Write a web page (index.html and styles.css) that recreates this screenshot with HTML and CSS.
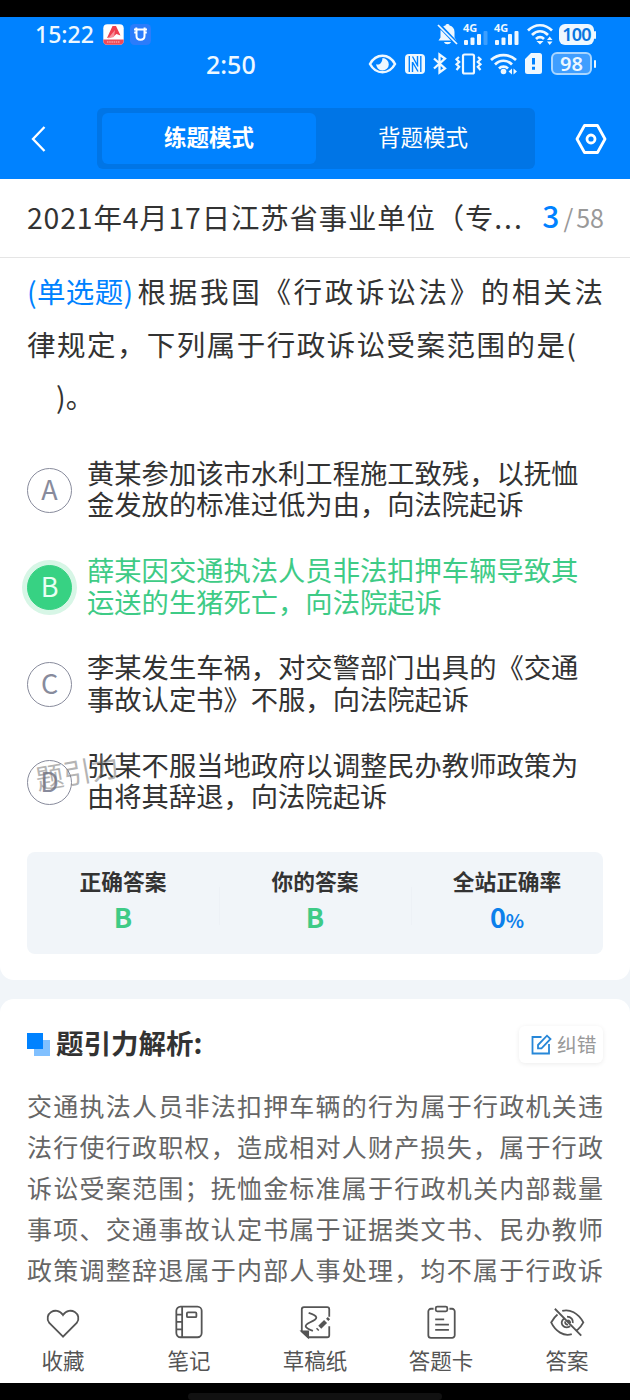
FILE: index.html
```
<!DOCTYPE html>
<html lang="zh-CN">
<head>
<meta charset="utf-8">
<title>练题模式</title>
<link rel="stylesheet" href="styles.css">
</head>
<body>
<div class="screen">
<div class="bezel"></div>
<header class="header">
  <div class="status status-top">
    <span class="clock">15:22</span>
    <svg class="app-a" width="21" height="21" viewBox="0 0 21 21"><rect x=".3" y=".3" width="20.4" height="20.4" rx="4" fill="#fff"/><path d="M.3 15.5h20.4v1.2a4 4 0 0 1-4 4H4.300a4 4 0 0 1-4-4z" fill="#f04a58"/><path d="M4 14 9.500 2h3.500l4.500 9.500-4-1.500-3 2.500z" fill="#ee3f50"/><path d="M5 14.500 12 6l-1 7z" fill="#f8919a"/><path d="M4 18h13" stroke="#ffc4c8" stroke-dasharray="1.500 .7"/></svg>
    <svg class="app-u" width="21" height="21" viewBox="0 0 21 21"><rect width="21" height="21" rx="4.500" fill="#2b7cfb"/><path d="M4 5.500h13M6.500 5.500v6.500c0 5 8 5 8 0V5.500M4.200 8.500h2M14.500 8.500h2.300M6.300 3.500v2M14.600 3.500v2" fill="none" stroke="#fff" stroke-width="2"/></svg>
    <svg class="bell" width="21" height="22" viewBox="0 0 21 22" fill="#eef8ff"><path d="M3.500 14.500V9c0-4 2.500-6 5-6.500 0-2 4-2 4 0 3 .7 5 3 5 6.500v5.500l2 3h-18zM7 19h7c-1 3-6 3-7 0z"/><path d="m1 1 19 20" stroke="#0082ff" stroke-width="4"/><path d="m1 2 19 19" stroke="#eef8ff" stroke-width="1.700"/></svg>
    <svg class="sig1" width="25" height="23" viewBox="0 0 25 23" fill="#eef8ff"><text class="g4" x="0" y="9">4G</text><rect x="1" y="17" width="4" height="5" rx="1"/><rect x="7.500" y="14.500" width="4" height="7.500" rx="1"/><rect x="14" y="11" width="4" height="11" rx="1"/><rect x="20.500" y="8" width="4" height="14" rx="1" opacity=".25"/></svg>
    <svg class="sig2" width="25" height="23" viewBox="0 0 25 23" fill="#eef8ff"><text class="g4" x="0" y="9">4G</text><rect x="1" y="17" width="4" height="5" rx="1"/><rect x="7.500" y="14.500" width="4" height="7.500" rx="1"/><rect x="14" y="11" width="4" height="11" rx="1"/><rect x="20.500" y="8" width="4" height="14" rx="1"/></svg>
    <svg class="wifi1" width="26" height="22" viewBox="0 0 26 22"><g fill="none" stroke="#eef8ff" stroke-width="2.700"><path d="M1 7.500c7-7 17-7 24 0M5 12c5-5 11-5 16 0M9 16c2.500-2.500 5.500-2.500 8 0"/></g><path d="m9.500 18 3.500 3.500 3.500-3.500zM20 17l2.700-3.500L25.500 17zM20 18.500l2.700 3.500 2.800-3.500z" fill="#eef8ff"/></svg>
    <span class="bat bat-full">100</span>
  </div>
  <div class="status status-second">
    <span class="clock">2:50</span>
    <svg class="eye" width="29" height="20" viewBox="0 0 29 20"><path d="M2 10C8-1 21-1 27 10 21 21 8 21 2 10z" fill="none" stroke="#eef8ff" stroke-width="2.500"/><path d="M14.500 4a6.300 6.300 0 1 1-6.300 6c2 1.500 6 0 6.300-6z" fill="#eef8ff"/></svg>
    <svg class="nfc" width="20" height="20" viewBox="0 0 20 20"><rect width="20" height="20" rx="4" fill="#eef8ff"/><path d="M4.300 2v16M7.500 18V8M7.500 2.500l5.500 10M7.500 8l5.500 9.500M12.500 12V2M15.800 18V2" fill="none" stroke="#0082ff" stroke-width="1.400"/></svg>
    <svg class="bt" width="14" height="21" viewBox="0 0 14 21"><path d="m1 5.500 11 10-5.500 4V1.500l5.500 4-11 10" fill="none" stroke="#eef8ff" stroke-width="2.300"/></svg>
    <svg class="vib" width="27" height="22" viewBox="0 0 27 22" fill="none" stroke="#eef8ff" stroke-width="2.200"><rect x="8" y="1.500" width="11" height="19" rx="1.500"/><path d="m4 4-2.500 2.300L4.200 9l-2.700 2.300 2.700 2.500L1.500 17M23 4l2.500 2.300L22.800 9l2.700 2.300-2.700 2.500 2.700 3.200"/></svg>
    <svg class="wifi2" width="27" height="22" viewBox="0 0 27 22"><g fill="none" stroke="#eef8ff" stroke-width="2.700"><path d="M1 7c7-6.500 18-6.500 25 0M5 11.500c5-5 12-5 17 0M9 15.500c2.500-2.500 6.500-2.500 9 0"/></g><circle cx="13.500" cy="18.500" r="2.800" fill="#eef8ff"/><path d="m22 15.500-3.500 3 3.500 3zM23.500 15.500l3.500 3-3.500 3z" fill="#eef8ff"/></svg>
    <svg class="sim" width="17" height="21" viewBox="0 0 17 21"><path d="M6 0h8.500A2.500 2.500 0 0 1 17 2.500v16a2.500 2.500 0 0 1-2.500 2.500h-12A2.500 2.500 0 0 1 0 18.500V6z" fill="#eef8ff"/><path d="M8.500 5v6.500M8.500 13.700v3" stroke="#0082ff" stroke-width="3"/></svg>
    <span class="bat bat-line">98</span>
  </div>
  <nav class="topnav">
    <svg class="back" width="16" height="30" viewBox="0 0 16 30"><path d="M13.500 3 2 15l11.500 12" fill="none" stroke="#fff" stroke-width="2.300"/></svg>
    <div class="tabs"><span class="tab tab-on">练题模式</span><span class="tab">背题模式</span></div>
    <svg class="gear" width="32" height="34" viewBox="0 0 32 34" fill="none" stroke="#fff" stroke-width="2.800" stroke-linejoin="round"><path d="M9.500 3.500h13L30 17l-7.500 13.500h-13L2 17z"/><circle cx="16" cy="17" r="4"/></svg>
  </nav>
</header>
<div class="titlebar"><h1>2021年4月17日江苏省事业单位（专<i>...</i></h1><span class="count"><b>3</b><em>/</em>58</span></div>
<main class="question">
  <div class="stem">
    <p class="line"><span class="kind">(单选题)</span><span class="fill">根据我国《行政诉讼法》的相关法</span></p>
    <p class="line line-two">律规定，下列属于行政诉讼受案范围的是(</p>
    <p class="line line-three">)。</p>
  </div>
  <ul class="options">
    <li><span class="mark">A</span><p>黄某参加该市水利工程施工致残，以抚恤<br>金发放的标准过低为由，向法院起诉</p></li>
    <li class="right"><span class="mark">B</span><p>薛某因交通执法人员非法扣押车辆导致其<br>运送的生猪死亡，向法院起诉</p></li>
    <li><span class="mark">C</span><p>李某发生车祸，对交警部门出具的《交通<br>事故认定书》不服，向法院起诉</p></li>
    <li><span class="mark">D</span><p>张某不服当地政府以调整民办教师政策为<br>由将其辞退，向法院起诉</p><span class="watermark">题引力</span></li>
  </ul>
  <div class="result">
    <div><span>正确答案</span><strong>B</strong></div>
    <div><span>你的答案</span><strong>B</strong></div>
    <div><span>全站正确率</span><strong class="rate">0<small>%</small></strong></div>
  </div>
</main>
<section class="analysis">
  <div class="ahead">
    <svg width="23" height="23" viewBox="0 0 23 23"><path d="M7 7h16v16H7z" fill="#80c0ff"/><path d="M0 0h16v16H0z" fill="#0082ff"/></svg>
    <h2>题引力解析:</h2>
    <span class="fix"><svg width="21" height="21" viewBox="0 0 21 21" fill="none" stroke="#2787d8" stroke-width="1.800"><path d="M10.500 3H1.500v16.500H18V10"/><path d="m7 11 9-9.300 3.500 3.300-9 9.300H7z"/></svg><span>纠错</span></span>
  </div>
  <div class="atext">
    <p>交通执法人员非法扣押车辆的行为属于行政机关违</p>
    <p>法行使行政职权，造成相对人财产损失，属于行政</p>
    <p>诉讼受案范围；抚恤金标准属于行政机关内部裁量</p>
    <p>事项、交通事故认定书属于证据类文书、民办教师</p>
    <p>政策调整辞退属于内部人事处理，均不属于行政诉</p>
  </div>
</section>
<footer class="toolbar">
  <div><svg viewBox="0 0 36 36"><path d="M18 31 5 18C-1 10 11.500 1 18 10.500 24.500 1 37 10 31 18z"/></svg>收藏</div>
  <div><svg viewBox="0 0 36 36"><rect x="6" y="2.500" width="24" height="29" rx="4"/><path d="M11.500 2.500v29M6 10h5.500M6 17h5.500M6 24h5.500"/><rect x="16" y="8" width="9" height="4.500" rx="1"/></svg>笔记</div>
  <div><svg viewBox="0 0 36 36"><path d="M31.500 12V5a2 2 0 0 0-2-2h-22a2 2 0 0 0-2 2V26l6 5.500h18a2 2 0 0 0 2-2V21M12 8.500c9 3 10 5 1 9-6 3-5 5 3 8"/><path d="M5.500 26H11.500v5.500z" fill="#555"/><path d="m22.500 22 5.500-5.500" stroke-width="4"/><path d="m20 24.500 1-1M29.500 15l1.700-1.700" stroke-width="3"/></svg>草稿纸</div>
  <div><svg viewBox="0 0 36 36"><path d="M11 4.500H8.500A2.500 2.500 0 0 0 6 7v22.500A2.500 2.500 0 0 0 8.500 32h20a2.500 2.500 0 0 0 2.500-2.500V7A2.500 2.500 0 0 0 28.500 4.500H26M12.500 14.500h8.500M12.500 19.500h13M12.500 24.500h13"/><rect x="13" y="2.500" width="11" height="4.500" rx="1.500"/></svg>答题卡</div>
  <div><svg viewBox="0 0 36 36"><path d="M13.500 6.500c7-2 15 2 20 11-2 4-4 6-6.500 8M22.500 28.500C15 31 7 26 3 17.500c2-3.500 3.500-5.500 6-7.500M15 14c-5 4 0 10.500 6 7M18 12c4 0 6 3 5.500 6M16.500 16.500c-1 2 1 3.500 2.500 3M18.500 15.500c1.500 0 2.500 1 2.500 2.500M6.500 4.500l25 25.500"/></svg>答案</div>
</footer>
<div class="homebar"><span></span></div>
</div>
</body>
</html>
```
FILE: styles.css
```
* { box-sizing: border-box; }
body, h1, h2, p, ul { margin: 0; padding: 0; }
body { background: #000; font-family: "Noto Sans CJK SC", sans-serif; color: #333; }
svg { display: block; flex: none; overflow: visible; }
.screen { width: 630px; height: 1400px; display: flex; flex-direction: column; overflow: hidden; background: #f1f5f9; }
.bezel { height: 17px; flex: none; background: #000; }

.header { height: 162px; flex: none; background: #0082ff; color: #eef8ff; }
.status { display: flex; align-items: center; white-space: nowrap; }
.clock { font-family: "Noto Sans", sans-serif; font-weight: 500; line-height: 30px; }
.status-top { height: 34px; padding-left: 35px; }
.status-top .clock { width: 59px; font-size: 23px; }
.app-a { margin-left: 9px; }
.app-u { margin-left: 6px; }
.bell { margin-left: 286px; }
.sig1 { margin-left: 5px; }
.sig2 { margin-left: 6px; }
.wifi1 { margin-left: 8px; }
.g4 { font: 700 11px "Noto Sans", sans-serif; }
.status-top .bat { margin-left: 6px; }
.status-second { height: 25px; padding-left: 206px; }
.status-second .clock { width: 53px; font-size: 25px; }
.eye { margin-left: 109px; }
.nfc { margin-left: 8px; }
.bt { margin-left: 8px; }
.vib { margin-left: 8px; }
.wifi2 { margin-left: 8px; }
.sim { margin-left: 8px; }
.status-second .bat { margin-left: 9px; }
.bat { position: relative; text-align: center; font: 600 18px/21px "Noto Sans", sans-serif; border-radius: 6px; }
.bat::after { content: ""; position: absolute; right: -2px; top: 7px; width: 2px; height: 8px; background: #eef8ff; border-radius: 1px; }
.bat-full { width: 35px; height: 21px; background: #eef8ff; color: #0875df; letter-spacing: -.8px; }
.bat-line { width: 41px; height: 23px; line-height: 19px; border: 2px solid #a9d6ff; background: #3f9eff; font-size: 20px; }
.bat-line::after { right: -6px; top: 6px; }
.topnav { height: 61px; margin-top: 32px; padding: 0 23px 0 31px; display: flex; align-items: center; }
.tabs { width: 438px; height: 61px; margin-left: 50px; padding: 5px; display: flex; border-radius: 6px; background: #0075e6; }
.tab { width: 214px; height: 51px; font-size: 22.500px; line-height: 47px; text-align: center; color: #fff; border-radius: 6px; }
.tab-on { background: #0082ff; font-weight: 700; }
.gear { margin-left: auto; }

.titlebar { height: 79px; flex: none; display: flex; align-items: center; justify-content: space-between; padding: 0 26px 4px 27px; background: #fff; border-bottom: 1px solid #e5e5e5; }
h1 { font-size: 28.400px; font-weight: 400; letter-spacing: .85px; white-space: nowrap; }
h1 i { font-style: normal; letter-spacing: 2px; }
.count { display: flex; align-items: baseline; font-size: 25px; line-height: 40px; color: #999; }
.count b { font-size: 30px; font-weight: 500; color: #0082ff; }
.count em { font-style: normal; margin: 0 3px 0 4px; }

.question { height: 722px; flex: none; padding: 8px 27px 0; background: #fff; border-radius: 0 0 14px 14px; }
.line { height: 52.600px; display: flex; font-size: 28.500px; line-height: 50px; white-space: nowrap; }
.kind { color: #0082ff; margin-right: 4px; letter-spacing: .35px; }
.fill { flex: 1; text-align-last: justify; }
.line-two { display: block; width: 549px; text-align-last: justify; }
.line-three { padding-left: 29px; }
.options { list-style: none; margin-top: 33px; display: grid; grid-auto-rows: 97.300px; }
.options li { position: relative; display: flex; align-items: flex-start; }
.options p { margin-left: 15px; font-size: 27.300px; line-height: 31.700px; white-space: nowrap; }
.mark { width: 45px; height: 45px; margin-top: 11px; flex: none; border: 1.500px solid #888b9c; border-radius: 50%; text-align: center; font-size: 27px; line-height: 39px; color: #888b9c; }
.right p { color: #3ecb86; }
.right .mark { background: #37d283; border-color: #37d283; color: #e9fff3; box-shadow: 0 0 0 5px #d7f6e6; }
.watermark { position: absolute; left: 8px; top: 2px; font-size: 28px; line-height: 40px; color: #777; opacity: .55; transform: rotate(-10deg); }
.result { height: 102px; padding-top: 13px; margin-top: 6px; display: grid; grid-template-columns: 1fr 1fr 1fr; background: #f1f5f9; border-radius: 8px; text-align: center; }
.result div { height: 74px; display: flex; flex-direction: column; }
.result div + div { background: linear-gradient(#edf1f6, #edf1f6) 0 22px / 1px 38px no-repeat; }
.result span { font-size: 21.700px; font-weight: 700; line-height: 32px; }
.result strong { font-size: 27px; line-height: 40px; color: #3ecb86; }
.result .rate { color: #0c80eb; }
.result small { font-size: 19px; }

.analysis { height: 296px; flex: none; margin-top: 19px; padding: 27px 27px 0; background: #fff; border-radius: 14px 14px 0 0; }
.ahead { display: flex; align-items: center; height: 37px; }
h2 { margin-left: 6px; padding-bottom: 5px; font-size: 27.500px; line-height: 36px; }
.fix { width: 84px; height: 37px; margin-left: auto; padding-left: 12px; display: flex; align-items: center; gap: 5px; border-radius: 6px; box-shadow: 0 1px 5px rgba(0,0,0,.08); font-size: 19.800px; color: #999; }
.fix span { padding-bottom: 3px; }
.atext { margin-top: 22px; }
.atext p { height: 41px; font-size: 25px; line-height: 40px; color: #666; white-space: nowrap; text-align-last: justify; }

.toolbar { height: 88px; flex: none; display: grid; grid-template-columns: repeat(5, 1fr); background: #fff; }
.toolbar div { display: flex; flex-direction: column; align-items: center; padding-top: 9px; font-size: 21.500px; line-height: 30px; color: #555; }
.toolbar svg { width: 38px; height: 38px; margin-bottom: 3px; fill: none; stroke: #555; stroke-width: 1.700; }
.homebar { height: 18px; flex: none; padding-top: 10px; background: #000; }
.homebar span { display: block; width: 254px; height: 7px; margin: 0 auto; border-radius: 4px; background: #111; }
```
